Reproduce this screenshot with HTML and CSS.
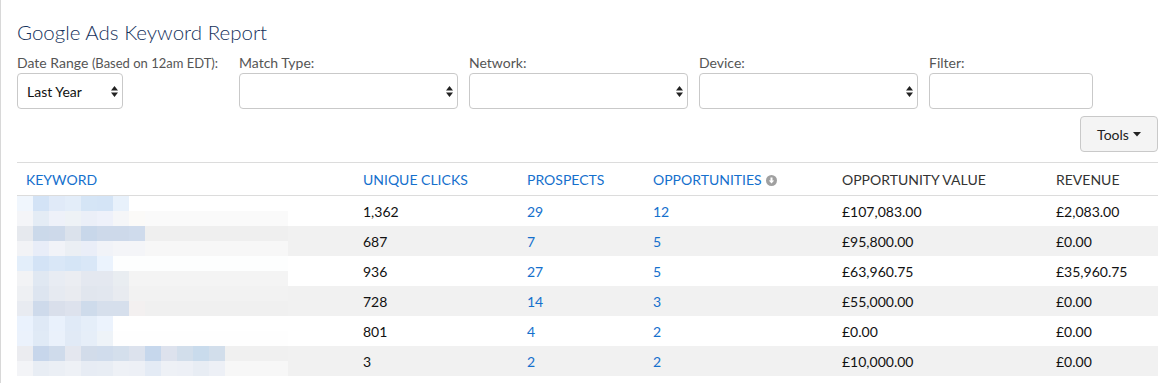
FILE: index.html
```html
<!DOCTYPE html>
<html lang="en">
<head>
  <meta charset="UTF-8" />
  <title>Google Ads Keyword Report</title>
  <link rel="stylesheet" href="styles.css">
</head>
<body>
  <div class="page">
    <h1 class="title">Google Ads Keyword Report</h1>

    <div class="filters">
      <div class="field field-date">
        <label>Date Range <small>(Based on 12am EDT):</small></label>
        <div class="select select-date">
          <span>Last Year</span>
          <svg class="arrows" width="7" height="11" viewBox="0 0 7 11"><path d="M3.5 0 L7 4.5 H0 Z M0 6.5 H7 L3.5 11 Z" fill="#222"/></svg>
        </div>
      </div>
      <div class="field field-wide">
        <label>Match Type:</label>
        <div class="select">
          <span></span>
          <svg class="arrows" width="7" height="11" viewBox="0 0 7 11"><path d="M3.5 0 L7 4.5 H0 Z M0 6.5 H7 L3.5 11 Z" fill="#222"/></svg>
        </div>
      </div>
      <div class="field field-wide">
        <label>Network:</label>
        <div class="select">
          <span></span>
          <svg class="arrows" width="7" height="11" viewBox="0 0 7 11"><path d="M3.5 0 L7 4.5 H0 Z M0 6.5 H7 L3.5 11 Z" fill="#222"/></svg>
        </div>
      </div>
      <div class="field field-wide">
        <label>Device:</label>
        <div class="select">
          <span></span>
          <svg class="arrows" width="7" height="11" viewBox="0 0 7 11"><path d="M3.5 0 L7 4.5 H0 Z M0 6.5 H7 L3.5 11 Z" fill="#222"/></svg>
        </div>
      </div>
      <div class="field field-filter">
        <label>Filter:</label>
        <div class="text-input"></div>
      </div>
    </div>

    <div class="toolbar">
      <button class="tools-btn" type="button">Tools <svg width="8" height="5" viewBox="0 0 8 5"><path d="M0 0 H8 L4 4.5 Z" fill="#222"/></svg></button>
    </div>

    <table class="report">
      <colgroup>
        <col style="width:337px">
        <col style="width:164px">
        <col style="width:126px">
        <col style="width:189px">
        <col style="width:214px">
        <col>
      </colgroup>
      <thead>
        <tr>
          <th class="sortable">KEYWORD</th>
          <th class="sortable">UNIQUE CLICKS</th>
          <th class="sortable">PROSPECTS</th>
          <th class="sortable">OPPORTUNITIES <svg class="sort-icon" width="11" height="11" viewBox="0 0 11 11"><circle cx="5.5" cy="5.5" r="5.5" fill="#a0a0a0"/><path d="M4.5 2.5 H6.5 V5.5 H8.2 L5.5 8.6 L2.8 5.5 H4.5 Z" fill="#fff"/></svg></th>
          <th>OPPORTUNITY VALUE</th>
          <th>REVENUE</th>
        </tr>
      </thead>
      <tbody id="reportBody"></tbody>
    </table>
  </div>

  <script type="text/javascript">
    // keyword column is redacted: each row is drawn as two strips of blurred blocks
    const rows = [
      {
        blur: [
          { cells: ['#f0f6fd', '#d3e3f6', '#e0eaf8', '#e3edf9', '#d5e5f6', '#d4e4f6', '#e8f1fb'], tail: '#ffffff' },
          { cells: ['#f4f5f8', '#e4ecf5', '#eef1f9', '#eef2f6', '#ebeff8', '#eef1fa', '#f5f6f8', '#fbfaf8'], tail: '#fafafa' }
        ],
        clicks: '1,362', prospects: '29', opps: '12', value: '£107,083.00', revenue: '£2,083.00'
      },
      {
        blur: [
          { cells: ['#e6e9ee', '#cbd9ea', '#cdd9ea', '#dbe2ec', '#c8d7ea', '#cdd9ea', '#cdd9ea', '#cfdbec'], tail: '#efefef' },
          { cells: ['#f2f3f6', '#e8edf8', '#f1f3f8', '#ebeff4', '#eaeef8', '#f1f3f8', '#f4f5f8', '#f4f5f8'], tail: '#f7f7f7' }
        ],
        clicks: '687', prospects: '7', opps: '5', value: '£95,800.00', revenue: '£0.00'
      },
      {
        blur: [
          { cells: ['#e3eefa', '#d3e3f6', '#d9e7f7', '#d5e5f6', '#d9e7f7', '#ebf3fd'], tail: '#fdfefe' },
          { cells: ['#f2f3f5', '#e0e8f2', '#e8ecf3', '#ebedf2', '#e4e8f0', '#e4e8f0', '#e9edf1'], tail: '#f4f4f4' }
        ],
        clicks: '936', prospects: '27', opps: '5', value: '£63,960.75', revenue: '£35,960.75'
      },
      {
        blur: [
          { cells: ['#eef0f3', '#dde5f0', '#e6eaf1', '#e9ebf0', '#e1e6ee', '#e2e7ef', '#e8ebf0'], tail: '#f2f2f2' },
          { cells: ['#e8ebf1', '#cedaeb', '#d9dfeb', '#dde2ed', '#cedbeb', '#d6dfec', '#d6dfec', '#f3f0f0'], tail: '#f0f0f0' }
        ],
        clicks: '728', prospects: '14', opps: '3', value: '£55,000.00', revenue: '£0.00'
      },
      {
        blur: [
          { cells: ['#eaf2fd', '#dfe9f6', '#e9f1fc', '#e0eaf7', '#e5eef9', '#ecf3fd'], tail: '#ffffff' },
          { cells: ['#ebf2fc', '#e0eaf6', '#eaf1fb', '#e1eaf6', '#e6eef8', '#eef3f8'], tail: '#fefefe' }
        ],
        clicks: '801', prospects: '4', opps: '2', value: '£0.00', revenue: '£0.00'
      },
      {
        blur: [
          { cells: ['#ebecf0', '#c7d6eb', '#cfdbeb', '#e4e7ef', '#d2dcea', '#d0dcec', '#d4dfec', '#dce2ed', '#c6d7ec', '#dde2ed', '#d2deeb', '#c9dbec', '#d2deeb'], tail: '#f0f0f0' },
          { cells: ['#f3f4f7', '#e8edf4', '#ebeff5', '#eef1f6', '#e7ecf4', '#e8edf4', '#eef1f6', '#edf0f6', '#e4ebf5', '#eef1f6', '#edf0f6', '#e8edf4', '#edf0f6'], tail: '#f7f7f7' }
        ],
        clicks: '3', prospects: '2', opps: '2', value: '£10,000.00', revenue: '£0.00'
      }
    ];

    function buildBlur(strips) {
      const blur = document.createElement('div');
      blur.className = 'blur';
      strips.forEach(strip => {
        const line = document.createElement('div');
        line.className = 'blur-strip';
        line.style.background = strip.tail;
        strip.cells.forEach(color => {
          const cell = document.createElement('span');
          cell.style.background = color;
          line.appendChild(cell);
        });
        blur.appendChild(line);
      });
      return blur;
    }

    function renderRows() {
      const body = document.getElementById('reportBody');
      rows.forEach(row => {
        const tr = document.createElement('tr');

        const kw = document.createElement('td');
        kw.className = 'keyword';
        kw.appendChild(buildBlur(row.blur));
        tr.appendChild(kw);

        const cells = [
          [row.clicks, ''],
          [row.prospects, 'link'],
          [row.opps, 'link'],
          [row.value, ''],
          [row.revenue, '']
        ];
        cells.forEach(([text, cls]) => {
          const td = document.createElement('td');
          if (cls) td.className = cls;
          td.textContent = text;
          tr.appendChild(td);
        });
        body.appendChild(tr);
      });
    }

    renderRows();
  </script>
</body>
</html>
```

FILE: styles.css
```css
body {
  margin: 0;
  background: #fff;
  font-family: Lato, 'Open Sans', Arial, sans-serif;
  color: #16325c;
}
.page {
  border-left: 1px solid #d8d8d8;
  min-height: 383px;
  box-sizing: border-box;
  padding: 20px 16px 0 16px;
}
.title {
  margin: 0;
  height: 24px;
  font-size: 20.5px;
  line-height: 24px;
  font-weight: 300;
  color: #16325c;
}
.filters {
  display: flex;
  gap: 11px;
  margin-top: 10px;
}
.field {
  display: flex;
  flex-direction: column;
}
.field label {
  display: block;
  height: 18px;
  font-size: 14px;
  line-height: 18px;
  color: #555;
  margin-bottom: 1px;
  white-space: nowrap;
}
.field label small {
  font-size: 13px;
}
.field-date {
  width: 211px;
}
.field-wide {
  width: 219px;
}
.field-filter {
  width: 164px;
}
.select, .text-input {
  height: 36px;
  box-sizing: border-box;
  border: 1px solid #c9c9c9;
  border-radius: 4px;
  background: #fff;
}
.select {
  display: flex;
  align-items: center;
  justify-content: space-between;
  padding: 0 4px 0 9px;
  font-size: 14px;
  color: #111;
}
.select-date {
  width: 106px;
}
.arrows {
  display: block;
}
.toolbar {
  display: flex;
  justify-content: flex-end;
  margin-top: 7px;
}
.tools-btn {
  height: 36px;
  width: 78px;
  box-sizing: border-box;
  border: 1px solid #c9c9c9;
  border-radius: 4px;
  background: #f4f4f4;
  font-family: inherit;
  font-size: 14px;
  color: #222;
  padding: 0;
  display: flex;
  align-items: center;
  justify-content: center;
  gap: 4px;
}
.report {
  width: 1141px;
  margin-top: 10px;
  border-collapse: collapse;
  table-layout: fixed;
  font-size: 14px;
}
.report th {
  height: 33px;
  padding: 1px 9px 0;
  box-sizing: border-box;
  text-align: left;
  font-weight: 400;
  color: #333;
  border-top: 1px solid #dcdcdc;
  border-bottom: 1px solid #dcdcdc;
  white-space: nowrap;
}
.report th.sortable {
  color: #1570cd;
}
.sort-icon {
  vertical-align: -1px;
  margin-left: 1px;
}
.report td {
  height: 30px;
  padding: 0 9px;
  color: #111;
}
.report tbody tr:nth-child(even) td {
  background: #f1f1f1;
}
.report td.link {
  color: #1570cd;
}
.report td.keyword {
  padding: 0;
}
.blur {
  display: flex;
  flex-direction: column;
  width: 271px;
}
.blur-strip {
  display: flex;
  height: 15px;
}
.blur-strip span {
  width: 16px;
  height: 15px;
}
```
